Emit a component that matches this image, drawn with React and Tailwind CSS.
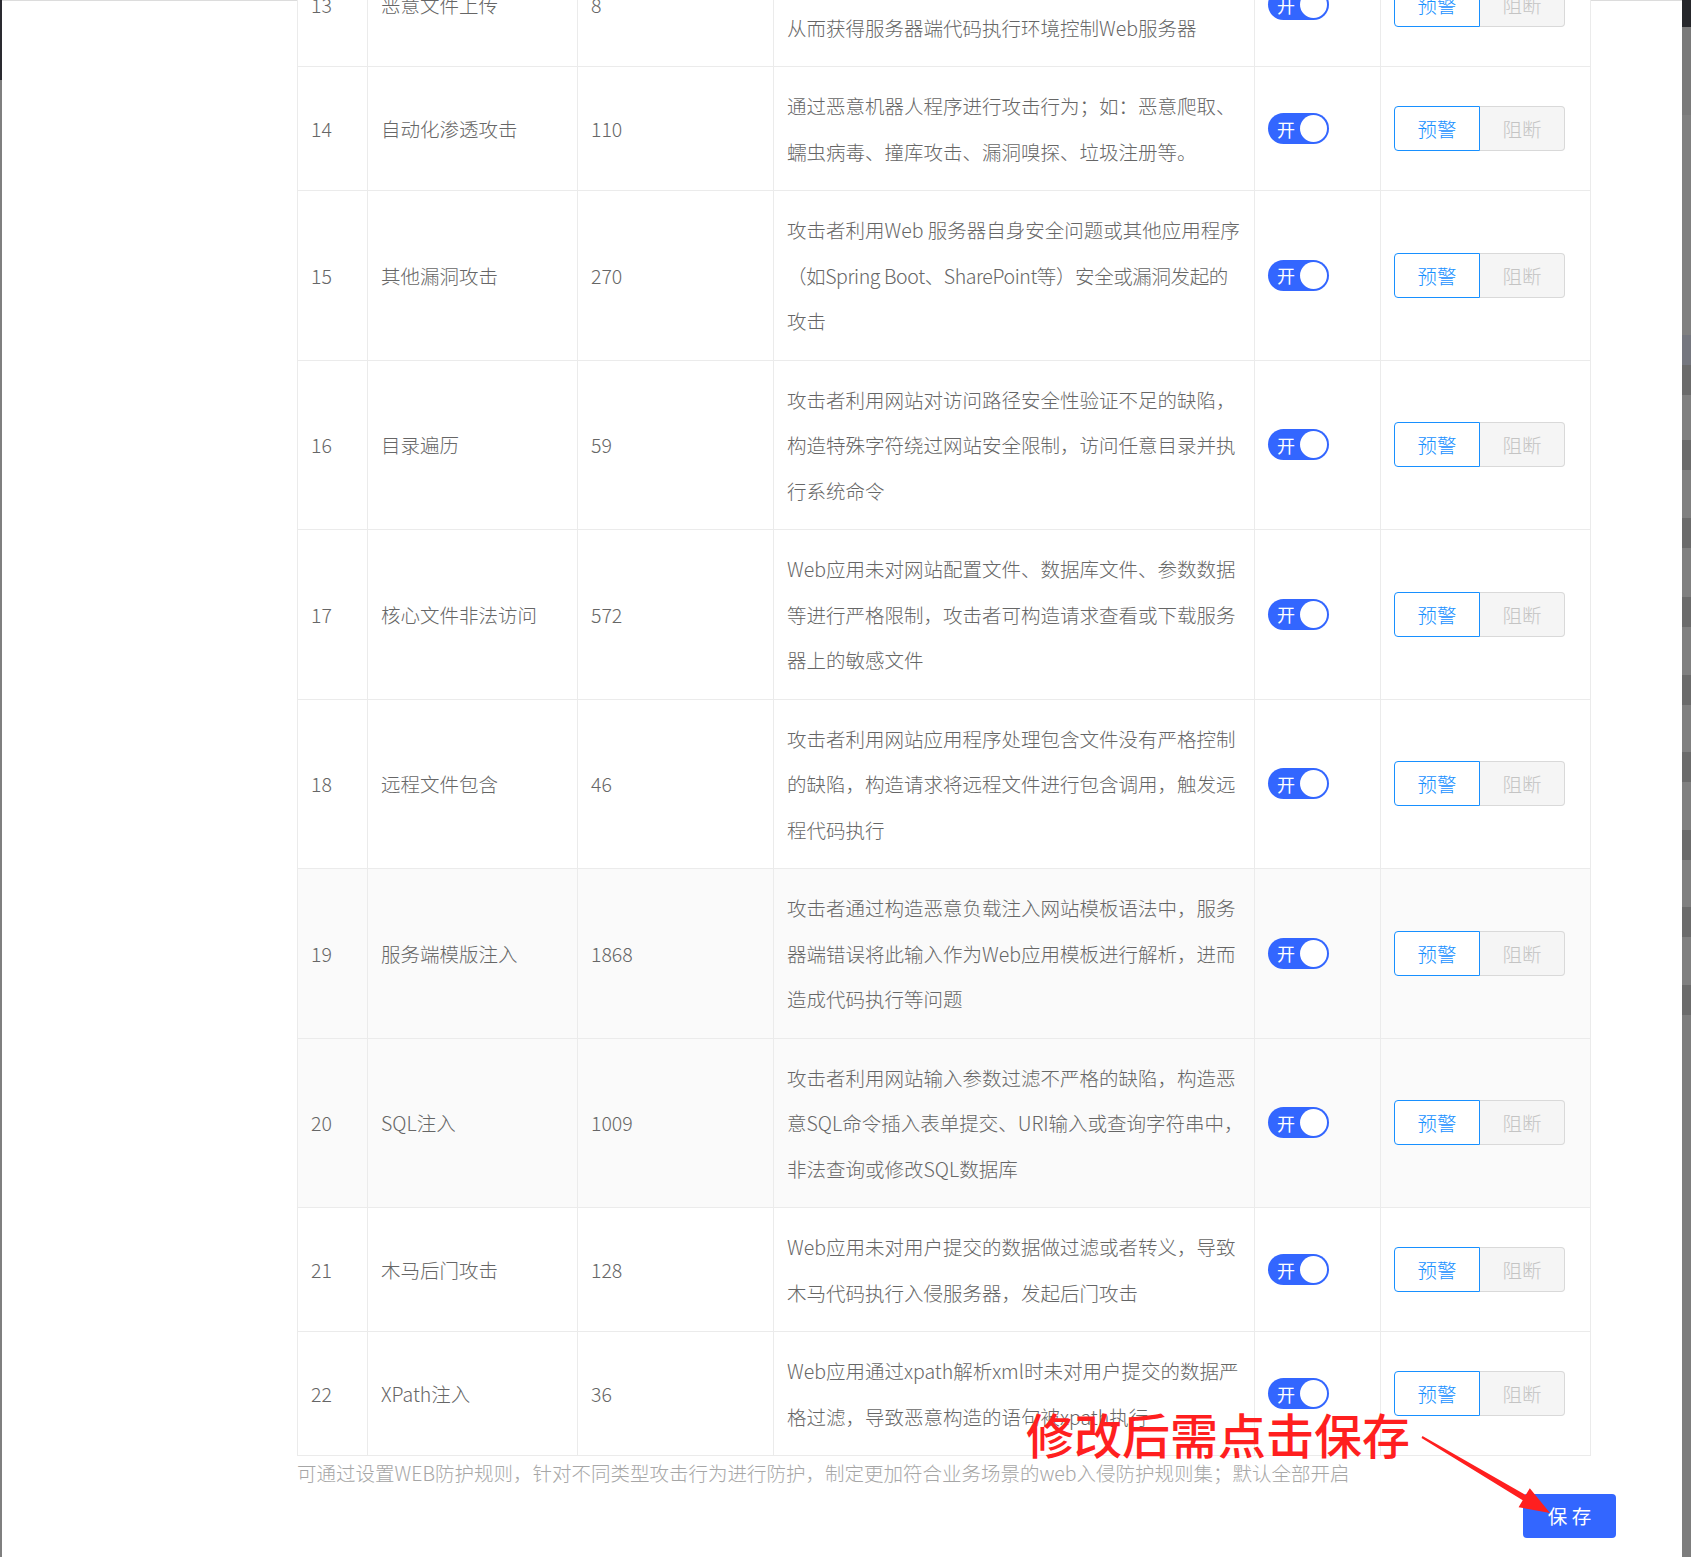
const rules = [
  {
    no: 13,
    name: "恶意文件上传",
    count: 8,
    desc: ["攻击者通过上传恶意脚本文件到网站服务器，", "从而获得服务器端代码执行环境控制Web服务器"],
  },
  {
    no: 14,
    name: "自动化渗透攻击",
    count: 110,
    desc: ["通过恶意机器人程序进行攻击行为；如：恶意爬取、", "蠕虫病毒、撞库攻击、漏洞嗅探、垃圾注册等。"],
  },
  {
    no: 15,
    name: "其他漏洞攻击",
    count: 270,
    desc: [
      "攻击者利用Web 服务器自身安全问题或其他应用程序",
      "（如Spring Boot、SharePoint等）安全或漏洞发起的",
      "攻击",
    ],
    tight: 1,
  },
  {
    no: 16,
    name: "目录遍历",
    count: 59,
    desc: [
      "攻击者利用网站对访问路径安全性验证不足的缺陷，",
      "构造特殊字符绕过网站安全限制，访问任意目录并执",
      "行系统命令",
    ],
  },
  {
    no: 17,
    name: "核心文件非法访问",
    count: 572,
    desc: [
      "Web应用未对网站配置文件、数据库文件、参数数据",
      "等进行严格限制，攻击者可构造请求查看或下载服务",
      "器上的敏感文件",
    ],
  },
  {
    no: 18,
    name: "远程文件包含",
    count: 46,
    desc: [
      "攻击者利用网站应用程序处理包含文件没有严格控制",
      "的缺陷，构造请求将远程文件进行包含调用，触发远",
      "程代码执行",
    ],
  },
  {
    no: 19,
    name: "服务端模版注入",
    count: 1868,
    shaded: true,
    desc: [
      "攻击者通过构造恶意负载注入网站模板语法中，服务",
      "器端错误将此输入作为Web应用模板进行解析，进而",
      "造成代码执行等问题",
    ],
  },
  {
    no: 20,
    name: "SQL注入",
    count: 1009,
    shaded: true,
    desc: [
      "攻击者利用网站输入参数过滤不严格的缺陷，构造恶",
      "意SQL命令插入表单提交、URI输入或查询字符串中，",
      "非法查询或修改SQL数据库",
    ],
  },
  {
    no: 21,
    name: "木马后门攻击",
    count: 128,
    desc: ["Web应用未对用户提交的数据做过滤或者转义，导致", "木马代码执行入侵服务器，发起后门攻击"],
  },
  {
    no: 22,
    name: "XPath注入",
    count: 36,
    desc: ["Web应用通过xpath解析xml时未对用户提交的数据严", "格过滤，导致恶意构造的语句被xpath执行"],
  },
];

// background page peeking through on the right edge
const stripe = [
  ["h-[27px]", "bg-[#26272b]"],
  ["h-[88px]", "bg-[#7a7a7a]"],
  ["h-[220px]", "bg-[#808080]"],
  ["h-[30px]", "bg-[#75777f]"],
  ["h-[30px]", "bg-[#6b6b6b]"],
  ["h-[45px]", "bg-[#808080]"],
  ["h-[30px]", "bg-[#6b6b6b]"],
  ["h-[48px]", "bg-[#808080]"],
  ["h-[30px]", "bg-[#6b6b6b]"],
  ["h-[49px]", "bg-[#808080]"],
  ["h-[30px]", "bg-[#6b6b6b]"],
  ["h-[48px]", "bg-[#808080]"],
  ["h-[30px]", "bg-[#6b6b6b]"],
  ["h-[47px]", "bg-[#808080]"],
  ["h-[30px]", "bg-[#6b6b6b]"],
  ["h-[48px]", "bg-[#808080]"],
  ["h-[30px]", "bg-[#6b6b6b]"],
  ["h-[47px]", "bg-[#808080]"],
  ["h-[30px]", "bg-[#6b6b6b]"],
  ["h-[48px]", "bg-[#808080]"],
  ["h-[30px]", "bg-[#6b6b6b]"],
  ["flex-1", "bg-[#7d7d7d]"],
];

function Switch() {
  return (
    <div className="flex h-[31px] w-[61px] items-center justify-between rounded-full bg-[#3366ff] pl-[9px] pr-[2px]">
      <span className="text-[18px] font-normal leading-none text-white">开</span>
      <span className="h-[27px] w-[27px] rounded-full bg-white" />
    </div>
  );
}

function ModeButtons() {
  return (
    <div className="flex h-[45px]">
      <div className="flex w-[86px] items-center justify-center rounded-l-[4px] border border-[#1890ff] bg-white text-[#1890ff]">
        预警
      </div>
      <div className="flex w-[85px] items-center justify-center rounded-r-[4px] border border-l-0 border-[#d9d9d9] bg-[#f5f5f5] text-[#c4c4c4]">
        阻断
      </div>
    </div>
  );
}

function RuleRow({ rule }) {
  const cell = "flex items-center px-[13px] border-r border-[#ebebeb]";
  return (
    <div
      className={
        "grid grid-cols-[70px_210px_196px_481px_126px_210px] border-b border-[#ebebeb] " +
        (rule.shaded ? "bg-[#fafafa]" : "bg-white")
      }
    >
      <div className={cell}>{rule.no}</div>
      <div className={cell}>{rule.name}</div>
      <div className={cell}>{rule.count}</div>
      <div className={cell + " py-[16px]"}>
        <div>
          {rule.desc.map((line, i) => (
            <div
              key={i}
              className={
                "whitespace-nowrap leading-[45.5px] " +
                (rule.tight === i ? "tracking-[-0.4px]" : "")
              }
            >
              {line}
            </div>
          ))}
        </div>
      </div>
      <div className={cell}>
        <Switch />
      </div>
      <div className={cell}>
        <ModeButtons />
      </div>
    </div>
  );
}

export default function App() {
  return (
    <div className="relative flex h-[1557px] w-full overflow-hidden bg-white font-['Noto_Sans_CJK_SC','Noto_Sans',sans-serif] text-[19.5px] font-light text-[#666]">
      {/* left edge of page behind */}
      <div className="flex w-[2px] flex-col">
        <div className="h-[80px] bg-[#2a2a30]" />
        <div className="flex-1 bg-[#7f7f7f]" />
      </div>

      {/* modal body */}
      <div className="flex w-[1680px] flex-col border-t border-[#dcdcdc] bg-white pl-[295px] pr-[66px]">
        <div className="-mt-[58px] w-[1294px] border-l border-[#ebebeb]">
          {rules.map((r) => (
            <RuleRow key={r.no} rule={r} />
          ))}
        </div>

        <p className="mt-[4px] leading-[26px] text-[#a6a6a6]">
          可通过设置WEB防护规则，针对不同类型攻击行为进行防护，制定更加符合业务场景的web入侵防护规则集；默认全部开启
        </p>

        <div className="mt-[8px] flex justify-end">
          <button className="flex h-[44px] w-[93px] items-center justify-center rounded-[4px] bg-[#3366ff] font-normal text-white">
            保 存
          </button>
        </div>
      </div>

      {/* right edge of page behind */}
      <div className="flex w-[9px] flex-col">
        {stripe.map(([h, c], i) => (
          <div key={i} className={h + " " + c} />
        ))}
      </div>

      {/* red annotation */}
      <div className="absolute left-[1026px] top-[1409px] whitespace-nowrap text-[48px] font-medium leading-none text-[#ff1f1f]">
        修改后需点击保存
      </div>
      <svg
        className="absolute left-[1415px] top-[1430px]"
        width="145"
        height="95"
        viewBox="0 0 145 95"
      >
        <polygon
          points="7.5,6.1 110.7,65.1 114.8,58.2 135,83 103.6,77.2 107.7,70.3 6.5,7.9"
          fill="#ff1f1f"
        />
      </svg>
    </div>
  );
}
